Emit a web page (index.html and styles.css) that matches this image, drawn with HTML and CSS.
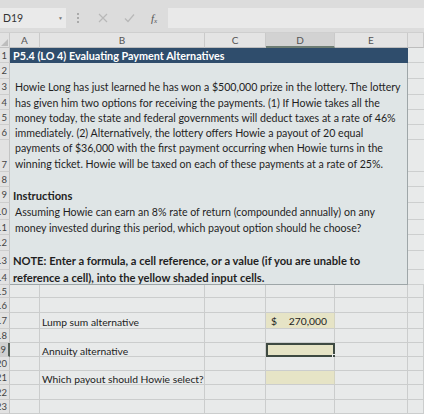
FILE: index.html
```html
<!DOCTYPE html>
<html>
<head>
<meta charset="utf-8">
<link rel="stylesheet" href="styles.css">
</head>
<body>
<div class="app">
  <div class="fbar">
    <div class="namebox"><span>D19</span><span class="arrow">&#9660;</span></div>
    <div class="dots"><i></i><i></i><i></i></div>
    <div class="icons">
      <svg class="ic" width="10" height="10" viewBox="0 0 10 10"><path d="M1 1L9 9M9 1L1 9" stroke="#b8b8b8" stroke-width="1.2" fill="none"/></svg>
      <svg class="ic" width="11" height="10" viewBox="0 0 11 10"><path d="M1 5.5L4 8.5L10 1.5" stroke="#b8b8b8" stroke-width="1.2" fill="none"/></svg>
      <span class="fx">f<sub>x</sub></span>
    </div>
    <div class="finput"></div>
  </div>
  <div class="sheet">
    <div class="corner"><svg width="7" height="7" viewBox="0 0 7 7"><path d="M7 0V7H0Z" fill="#bdbdbd"/></svg></div>
    <div class="ch">A</div>
    <div class="ch">B</div>
    <div class="ch">C</div>
    <div class="ch sel">D</div>
    <div class="ch">E</div>
    <div class="ch"></div>

    <div class="rh r1">1</div><div class="fcell r1"></div>
    <div class="rh r2">2</div><div class="fcell r2"></div>
    <div class="rh r3">3</div><div class="fcell r3"></div>
    <div class="rh r4">4</div><div class="fcell r4"></div>
    <div class="rh r5">5</div><div class="fcell r5"></div>
    <div class="rh r6">6</div><div class="fcell r6"></div>
    <div class="rh r7 bottom">7</div><div class="fcell r7"></div>
    <div class="rh r8">8</div><div class="fcell r8"></div>
    <div class="rh r9">9</div><div class="fcell r9"></div>
    <div class="rh r10">10</div><div class="fcell r10"></div>
    <div class="rh r11">11</div><div class="fcell r11"></div>
    <div class="rh r12">12</div><div class="fcell r12"></div>
    <div class="rh r13">13</div><div class="fcell r13"></div>
    <div class="rh r14">14</div><div class="fcell r14"></div>

    <div class="box"></div>
    <div class="title">P5.4 (LO 4) Evaluating Payment Alternatives</div>
    <div class="line r3">Howie Long has just learned he has won a $500,000 prize in the lottery. The lottery</div>
    <div class="line r4">has given him two options for receiving the payments. (1) If Howie takes all the</div>
    <div class="line r5">money today, the state and federal governments will deduct taxes at a rate of 46%</div>
    <div class="line r6">immediately. (2) Alternatively, the lottery offers Howie a payout of 20 equal</div>
    <div class="line r7 two">payments of $36,000 with the first payment occurring when Howie turns in the<br>winning ticket. Howie will be taxed on each of these payments at a rate of 25%.</div>
    <div class="line r9 b">Instructions</div>
    <div class="line r10">Assuming Howie can earn an 8% rate of return (compounded annually) on any</div>
    <div class="line r11">money invested during this period, which payout option should he choose?</div>
    <div class="line r13 b">NOTE: Enter a formula, a cell reference, or a value (if you are unable to</div>
    <div class="line r14 b">reference a cell), into the yellow shaded input cells.</div>

    <div class="rh">15</div><div class="c"></div><div class="c"></div><div class="c"></div><div class="c"></div><div class="c"></div><div class="c"></div>
    <div class="rh">16</div><div class="c"></div><div class="c"></div><div class="c"></div><div class="c"></div><div class="c"></div><div class="c"></div>
    <div class="rh">17</div><div class="c"></div><div class="c txt">Lump sum alternative</div><div class="c"></div><div class="c yel money"><span>$</span><span>270,000</span></div><div class="c"></div><div class="c"></div>
    <div class="rh">18</div><div class="c"></div><div class="c"></div><div class="c"></div><div class="c"></div><div class="c"></div><div class="c"></div>
    <div class="rh selrow">19</div><div class="c"></div><div class="c txt">Annuity alternative</div><div class="c"></div><div class="c yel active"><span class="handle"></span></div><div class="c"></div><div class="c"></div>
    <div class="rh">20</div><div class="c"></div><div class="c"></div><div class="c"></div><div class="c"></div><div class="c"></div><div class="c"></div>
    <div class="rh">21</div><div class="c"></div><div class="c txt">Which payout should Howie select?</div><div class="c"></div><div class="c yel"></div><div class="c"></div><div class="c"></div>
    <div class="rh">22</div><div class="c"></div><div class="c"></div><div class="c"></div><div class="c"></div><div class="c"></div><div class="c"></div>
    <div class="rh">23</div><div class="c"></div><div class="c"></div><div class="c"></div><div class="c"></div><div class="c"></div><div class="c"></div>
  </div>
</div>
</body>
</html>
```

FILE: styles.css
```css
* { box-sizing: border-box; }
html, body { margin: 0; padding: 0; }
body {
  width: 424px;
  height: 414px;
  overflow: hidden;
  background: #e6e8e8;
  font-family: Lato, "Open Sans", sans-serif;
  color: #222;
}
.app { width: 424px; height: 414px; overflow: hidden; }

.fbar {
  height: 33px;
  background: #dcdcdc;
  display: flex;
  align-items: flex-start;
  padding-top: 8px;
  border-bottom: 1px solid #cfcfcf;
}
.namebox {
  width: 66px;
  height: 20px;
  background: #eaeaea;
  display: flex;
  align-items: center;
  justify-content: space-between;
  padding: 0 3px;
  font-size: 10.5px;
  color: #333;
}
.namebox .arrow { font-size: 5px; color: #777; }
.dots {
  width: 24px;
  height: 20px;
  display: flex;
  flex-direction: column;
  align-items: center;
  justify-content: center;
  gap: 2px;
}
.dots i { width: 2px; height: 2px; background: #aaa; display: block; }
.icons {
  width: 78px;
  height: 20px;
  display: flex;
  align-items: center;
  gap: 16px;
  padding-left: 8px;
}
.fx { font-family: "Liberation Serif", serif; font-style: italic; font-size: 11px; color: #555; }
.fx sub { font-size: 7px; vertical-align: -1px; }
.finput { flex: 1; height: 20px; background: #e9e9e9; }

.sheet {
  display: grid;
  grid-template-columns: 10px 30px 165px 61px 69px 73px 1fr;
  grid-template-rows: 15px 15px 16px 16px 15px 15px 15px 32px 15px 16px 17px 15px 16px 19px 15px 13px 15px 16px 14px 14px 14px 14px 15px 14px;
}
.corner {
  background: #e2e2e2;
  border-right: 1px solid #c9c9c9;
  border-bottom: 1px solid #c2c2c2;
  display: flex;
  align-items: flex-end;
  justify-content: flex-end;
  padding: 0 1px 1px 0;
}
.ch {
  background: #e4e4e4;
  border-right: 1px solid #cacaca;
  border-bottom: 1px solid #bdbdbd;
  font-size: 10px;
  color: #555;
  display: flex;
  align-items: center;
  justify-content: center;
}
.ch.sel { background: #d2d2d2; border-bottom: 2px solid #6d7c73; }
.rh {
  grid-column: 1;
  background: #e2e2e2;
  border-right: 1px solid #c4c4c4;
  border-bottom: 1px solid #cdcdcd;
  font-size: 9.5px;
  color: #444;
  display: flex;
  align-items: center;
  justify-content: flex-end;
  padding-right: 2px;
  overflow: hidden;
  white-space: nowrap;
}
.rh.bottom { align-items: flex-end; padding-bottom: 1px; }
.rh.selrow { background: #d0d0d0; border-right: 2px solid #555f58; }
.fcell { grid-column: 7; border-bottom: 1px solid #cdcfcf; background: #e8eaea; }

.r1 { grid-row: 2; } .r2 { grid-row: 3; } .r3 { grid-row: 4; } .r4 { grid-row: 5; }
.r5 { grid-row: 6; } .r6 { grid-row: 7; } .r7 { grid-row: 8; } .r8 { grid-row: 9; }
.r9 { grid-row: 10; } .r10 { grid-row: 11; } .r11 { grid-row: 12; } .r12 { grid-row: 13; }
.r13 { grid-row: 14; } .r14 { grid-row: 15; }

.box {
  grid-column: 2 / 7;
  grid-row: 2 / 16;
  background: #dfe5e6;
  border-right: 1px solid #9ea6a8;
  border-bottom: 1px solid #9ea6a8;
}
.title {
  grid-column: 2 / 7;
  grid-row: 2;
  background: #2f4d6c;
  color: #fff;
  font-weight: bold;
  font-size: 10.8px;
  padding-left: 3px;
  display: flex;
  align-items: center;
  white-space: nowrap;
}
.line {
  grid-column: 2 / 7;
  font-size: 10.6px;
  padding-left: 5px;
  display: flex;
  align-items: center;
  white-space: nowrap;
  color: #1f1f1f;
}
.line.two { display: block; line-height: 16px; }
.line.b { font-weight: bold; padding-left: 3px; font-size: 11.2px; }

.c {
  background: #e8eaea;
  border-right: 1px solid #cbcdcd;
  border-bottom: 1px solid #cbcdcd;
  font-size: 10.3px;
  display: flex;
  align-items: center;
  white-space: nowrap;
  position: relative;
}
.c.txt { padding-left: 2px; padding-top: 2px; color: #222; z-index: 1; }
.c.yel { background: #e6e4c6; border-right-color: #d4d4c0; }
.c.money { justify-content: space-between; padding: 0 7px 0 5px; color: #222; }
.c.active { border: 2px solid #3e4a42; }
.handle {
  position: absolute;
  right: -4px;
  bottom: -4px;
  width: 5px;
  height: 5px;
  background: #3e4a42;
  border: 1px solid #e8eaea;
}
```
